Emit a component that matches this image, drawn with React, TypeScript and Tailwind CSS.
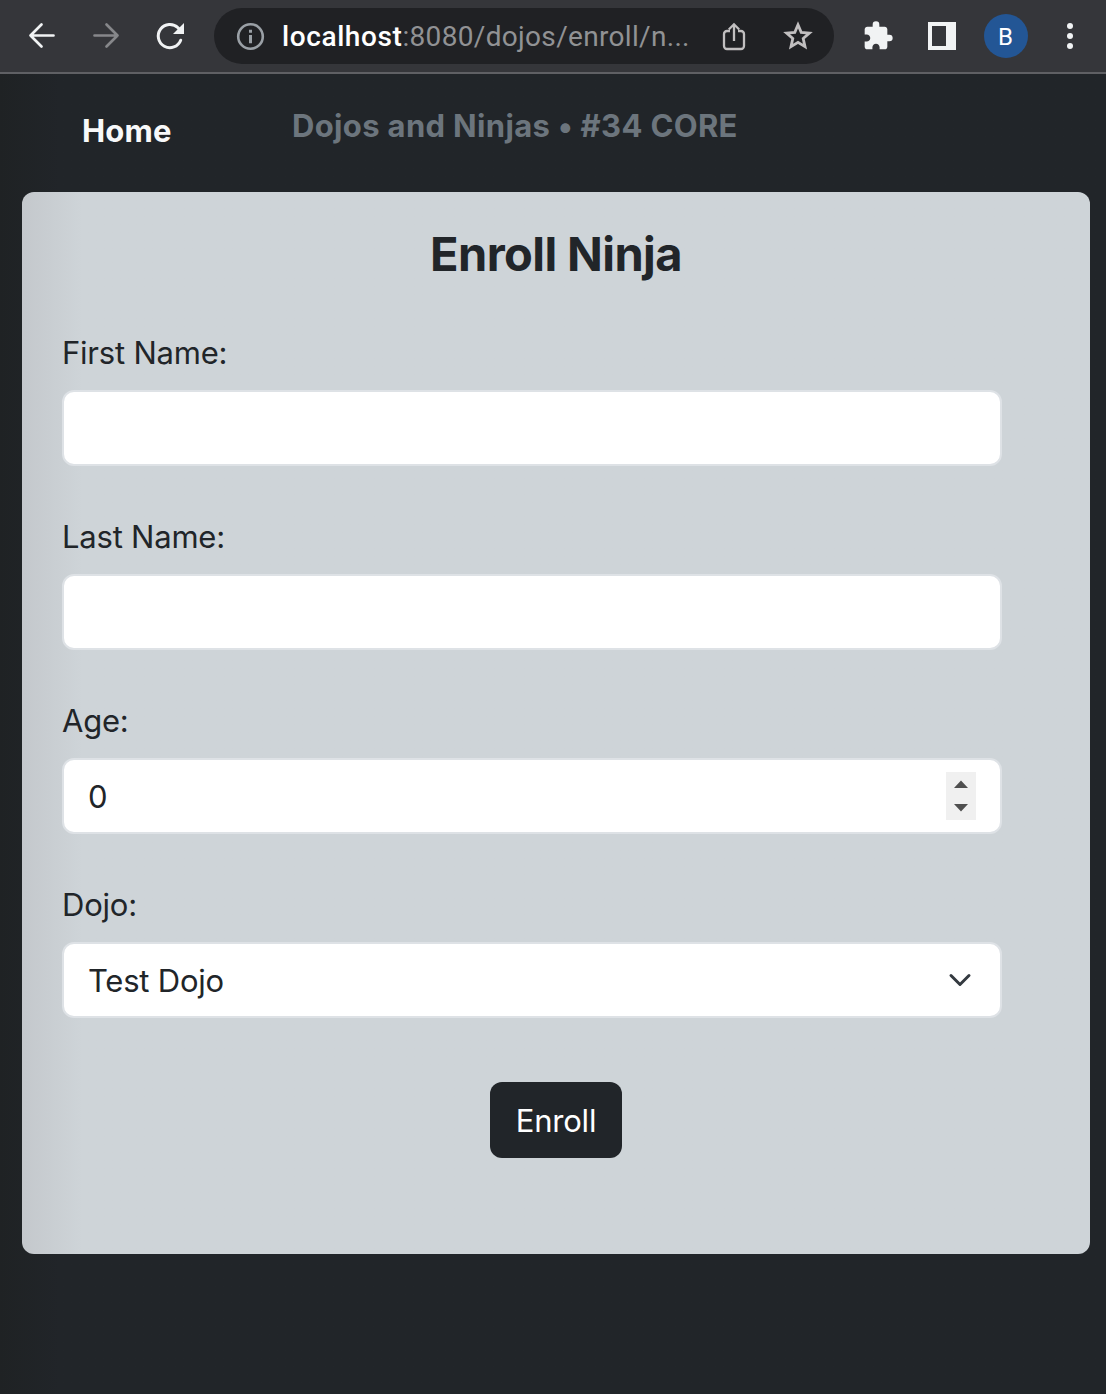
import type { ReactNode } from 'react';

function Toolbar() {
  return (
    <header className="flex h-[74px] items-center border-b-2 border-[#5f6064] bg-[#35363a]">
      <div className="flex w-[214px] shrink-0 items-center">
        <svg className="ml-[22px] h-10 w-10" viewBox="0 0 40 40" fill="none" stroke="#f1f3f4" strokeWidth="2.7" strokeLinecap="round" strokeLinejoin="round">
          <path d="M31.5 19.5H8.5M19.5 8.5l-11 11 11 11" />
        </svg>
        <svg className="ml-6 h-10 w-10" viewBox="0 0 40 40" fill="none" stroke="#86878a" strokeWidth="2.7" strokeLinecap="round" strokeLinejoin="round">
          <path d="M8.5 19.5h23M20.5 8.5l11 11-11 11" />
        </svg>
        <svg className="ml-6 h-10 w-10" viewBox="0 0 40 40" fill="none">
          <path d="M30.7 24.2A11.6 11.6 0 1 1 28 11.8l2 2.2" stroke="#f1f3f4" strokeWidth="3" strokeLinecap="round" />
          <path d="M34 7v11H23z" fill="#f1f3f4" />
        </svg>
      </div>
      <div className="flex h-14 w-[620px] shrink-0 items-center rounded-full bg-[#202124] pl-[22px]">
        <svg className="h-[29px] w-[29px] shrink-0" viewBox="0 0 29 29" fill="none">
          <circle cx="14.5" cy="14.5" r="12.3" stroke="#9aa0a6" strokeWidth="2.6" />
          <path d="M13 7.8h3v3h-3zM13 12.9h3v8.3h-3z" fill="#9aa0a6" />
        </svg>
        <div className="ml-[17px] w-[431px] shrink-0 pt-0.5 font-[Roboto] text-[28px] leading-[54px] tracking-[0.32px] whitespace-nowrap text-[#919294]">
          <span className="font-medium tracking-[0.6px] text-white">localhost</span>:8080/dojos/enroll/n...
        </div>
        <svg className="h-10 w-10 shrink-0" viewBox="0 0 40 40" fill="none" stroke="#c1bfc0" strokeWidth="2.3">
          <path d="M17 15h-3a3 3 0 0 0-3 3v12a3 3 0 0 0 3 3h14a3 3 0 0 0 3-3V18a3 3 0 0 0-3-3h-3" />
          <path d="M21 25V8.5M15.8 13.5l5.2-5.2 5.2 5.2" />
        </svg>
        <svg className="ml-[25px] h-[38px] w-[38px] shrink-0" viewBox="0 0 38 38" fill="none" stroke="#c1bfc0" strokeWidth="2.8">
          <path d="M20 7.8l3.2 7.6 8.2.7-6.2 5.4 1.8 8.1-7-4.3-7 4.3 1.8-8.1-6.2-5.4 8.2-.7z" />
        </svg>
      </div>
      <svg className="ml-7 h-8 w-8 shrink-0" viewBox="0 0 24 24" fill="#f1f3f4">
        <path d="M20.5 11H19V7c0-1.1-.9-2-2-2h-4V3.5a2.5 2.5 0 0 0-5 0V5H4c-1.1 0-1.99.9-1.99 2v3.8H3.5c1.49 0 2.7 1.21 2.7 2.7s-1.21 2.7-2.7 2.7H2V20c0 1.1.9 2 2 2h3.8v-1.5c0-1.49 1.21-2.7 2.7-2.7s2.7 1.21 2.7 2.7V22H17c1.1 0 2-.9 2-2v-4h1.5a2.5 2.5 0 0 0 0-5z" />
      </svg>
      <div className="ml-[34px] h-7 w-7 shrink-0 border-4 border-r-[10px] border-[#f1f3f4]" />
      <div className="ml-7 flex h-11 w-11 shrink-0 items-center justify-center rounded-full bg-[#235695] pt-0.5 pr-px font-[Roboto] text-[24px] leading-none text-white">B</div>
      <div className="ml-[39px] flex flex-col gap-1">
        <i className="h-1.5 w-1.5 rounded-full bg-[#f1f3f4]" />
        <i className="h-1.5 w-1.5 rounded-full bg-[#f1f3f4]" />
        <i className="h-1.5 w-1.5 rounded-full bg-[#f1f3f4]" />
      </div>
    </header>
  );
}

function Field({ label, children }: { label: string; children?: ReactNode }) {
  return (
    <label className="mb-11 block">
      <span className="block h-16 text-[31px] leading-[54px] tracking-[-0.22px]">{label}</span>
      <div className="flex h-[76px] w-[940px] items-center justify-between rounded-[12px] border-2 border-[#dee2e6] bg-white px-6 text-[31px] tracking-[-0.22px]">
        {children}
      </div>
    </label>
  );
}

export default function App() {
  return (
    <div className="h-[1394px] w-[1106px] overflow-hidden bg-[#212529] bg-linear-to-r from-[#1f2224] to-[#212529] to-[60px] font-[Inter,sans-serif] text-[#212529]">
      <Toolbar />
      <nav className="flex h-[118px] items-start pl-[82px] text-[31px] leading-[48px] font-bold">
        <a className="mt-[33px] w-[210px] tracking-[0.2px] text-[#f8f9fa]">Home</a>
        <span className="mt-7 tracking-[0.34px] whitespace-nowrap text-[#6c757d]">Dojos and Ninjas • #34 CORE</span>
      </nav>
      <main className="ml-[22px] h-[1062px] w-[1068px] rounded-[12px] bg-linear-to-r from-[#c4c8cc] to-[#ced4d8] to-[60px] px-10 pt-8">
        <h1 className="h-[102px] text-center text-[47px] leading-[60px] font-bold tracking-[-0.6px]">Enroll Ninja</h1>
        <form>
          <Field label="First Name:" />
          <Field label="Last Name:" />
          <Field label="Age:">
            <span className="pt-0.5">0</span>
            <svg className="h-12 w-[30px]" viewBox="0 0 30 48">
              <path d="M0 0h30v48H0z" fill="#f0f0f0" />
              <path d="M15 8.5l7 7.5H8zM8 32h14l-7 7.5z" fill="#4f4f4f" />
            </svg>
          </Field>
          <Field label="Dojo:">
            <span className="pt-0.5">Test Dojo</span>
            <svg className="mr-1 h-6 w-6" viewBox="0 0 16 16" fill="none" stroke="#343a40" strokeWidth="2" strokeLinecap="round" strokeLinejoin="round">
              <path d="m2 5 6 6 6-6" />
            </svg>
          </Field>
          <button type="button" className="mx-auto mt-16 block h-[76px] w-[132px] rounded-[12px] bg-[#212529] pt-0.5 text-[31px] tracking-[-0.22px] text-white">Enroll</button>
        </form>
      </main>
    </div>
  );
}
